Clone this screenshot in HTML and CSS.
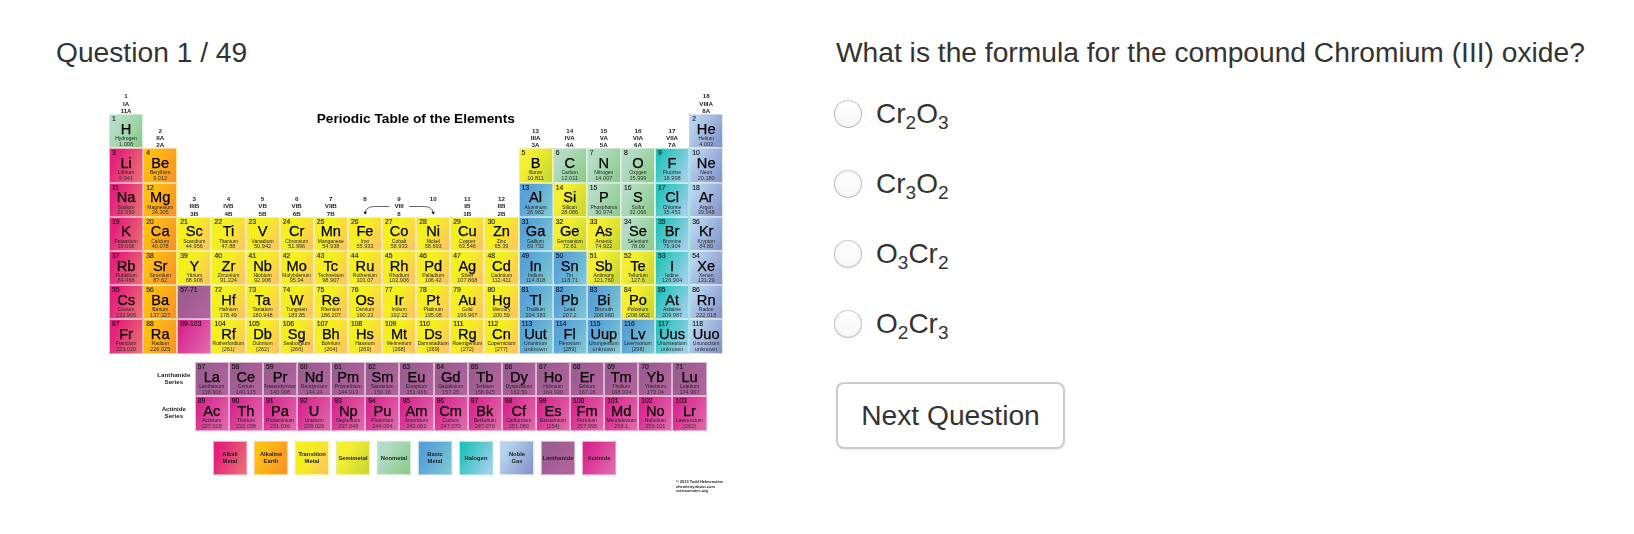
FILE: index.html
```html
<!DOCTYPE html>
<html lang="en">
<head>
<meta charset="utf-8">
<title>Question 1 / 49</title>
<link rel="stylesheet" href="styles.css">
</head>
<body>
<main class="page">
<section class="left">
<h3 class="heading">Question 1 / 49</h3>
<div class="chart">
<div class="table">
<div class="lbl"><p>1</p><p>IA</p><p>11A</p></div><div class="blank16"></div><div class="lbl"><p>18</p><p>VIIIA</p><p>8A</p></div>
<div class="c nm"><i>1</i><b>H</b><span>Hydrogen</span><em>1.008</em></div><div class="lbl"><p>2</p><p>IIA</p><p>2A</p></div><div class="title">Periodic Table of the Elements</div><div class="lbl"><p>13</p><p>IIIA</p><p>3A</p></div><div class="lbl"><p>14</p><p>IVA</p><p>4A</p></div><div class="lbl"><p>15</p><p>VA</p><p>5A</p></div><div class="lbl"><p>16</p><p>VIA</p><p>6A</p></div><div class="lbl"><p>17</p><p>VIIA</p><p>7A</p></div><div class="c ng"><i>2</i><b>He</b><span>Helium</span><em>4.003</em></div>
<div class="c am"><i>3</i><b>Li</b><span>Lithium</span><em>6.941</em></div><div class="c ae"><i>4</i><b>Be</b><span>Beryllium</span><em>9.012</em></div><div class="blank10"></div><div class="c sm"><i>5</i><b>B</b><span>Boron</span><em>10.811</em></div><div class="c nm"><i>6</i><b>C</b><span>Carbon</span><em>12.011</em></div><div class="c nm"><i>7</i><b>N</b><span>Nitrogen</span><em>14.007</em></div><div class="c nm"><i>8</i><b>O</b><span>Oxygen</span><em>15.999</em></div><div class="c ha"><i>9</i><b>F</b><span>Fluorine</span><em>18.998</em></div><div class="c ng"><i>10</i><b>Ne</b><span>Neon</span><em>20.180</em></div>
<div class="c am"><i>11</i><b>Na</b><span>Sodium</span><em>22.990</em></div><div class="c ae"><i>12</i><b>Mg</b><span>Magnesium</span><em>24.305</em></div><div class="lbl"><p>3</p><p>IIIB</p><p>3B</p></div><div class="lbl"><p>4</p><p>IVB</p><p>4B</p></div><div class="lbl"><p>5</p><p>VB</p><p>5B</p></div><div class="lbl"><p>6</p><p>VIB</p><p>6B</p></div><div class="lbl"><p>7</p><p>VIIB</p><p>7B</p></div>
<div class="triad"><div class="lbl"><p>8</p><p>&nbsp;</p><p>&nbsp;</p></div><div class="lbl"><p>9</p><p>VIII</p><p>8</p></div><div class="lbl"><p>10</p><p>&nbsp;</p><p>&nbsp;</p></div><svg class="arrows" viewBox="0 0 102 12" aria-hidden="true"><path d="M41 3.500H27C21 3.500 17.500 5.500 17 10M61 3.500H75C81 3.500 84.500 5.500 85 10" fill="none" stroke="#222" stroke-width=".7"/><path d="M15.300 8.800H18.800L17 11.800ZM83.200 8.800H86.700L85 11.800Z" fill="#111"/></svg></div>
<div class="lbl"><p>11</p><p>IB</p><p>1B</p></div><div class="lbl"><p>12</p><p>IIB</p><p>2B</p></div><div class="c bm"><i>13</i><b>Al</b><span>Aluminum</span><em>26.982</em></div><div class="c sm"><i>14</i><b>Si</b><span>Silicon</span><em>28.086</em></div><div class="c nm"><i>15</i><b>P</b><span>Phosphorus</span><em>30.974</em></div><div class="c nm"><i>16</i><b>S</b><span>Sulfur</span><em>32.066</em></div><div class="c ha"><i>17</i><b>Cl</b><span>Chlorine</span><em>35.453</em></div><div class="c ng"><i>18</i><b>Ar</b><span>Argon</span><em>39.948</em></div>
<div class="c am"><i>19</i><b>K</b><span>Potassium</span><em>39.098</em></div><div class="c ae"><i>20</i><b>Ca</b><span>Calcium</span><em>40.078</em></div><div class="c tm"><i>21</i><b>Sc</b><span>Scandium</span><em>44.956</em></div><div class="c tm"><i>22</i><b>Ti</b><span>Titanium</span><em>47.88</em></div><div class="c tm"><i>23</i><b>V</b><span>Vanadium</span><em>50.942</em></div><div class="c tm"><i>24</i><b>Cr</b><span>Chromium</span><em>51.996</em></div><div class="c tm"><i>25</i><b>Mn</b><span>Manganese</span><em>54.938</em></div><div class="c tm"><i>26</i><b>Fe</b><span>Iron</span><em>55.933</em></div><div class="c tm"><i>27</i><b>Co</b><span>Cobalt</span><em>58.933</em></div><div class="c tm"><i>28</i><b>Ni</b><span>Nickel</span><em>58.693</em></div><div class="c tm"><i>29</i><b>Cu</b><span>Copper</span><em>63.546</em></div><div class="c tm"><i>30</i><b>Zn</b><span>Zinc</span><em>65.39</em></div><div class="c bm"><i>31</i><b>Ga</b><span>Gallium</span><em>69.732</em></div><div class="c sm"><i>32</i><b>Ge</b><span>Germanium</span><em>72.61</em></div><div class="c sm"><i>33</i><b>As</b><span>Arsenic</span><em>74.922</em></div><div class="c nm"><i>34</i><b>Se</b><span>Selenium</span><em>78.09</em></div><div class="c ha"><i>35</i><b>Br</b><span>Bromine</span><em>79.904</em></div><div class="c ng"><i>36</i><b>Kr</b><span>Krypton</span><em>84.80</em></div>
<div class="c am"><i>37</i><b>Rb</b><span>Rubidium</span><em>84.468</em></div><div class="c ae"><i>38</i><b>Sr</b><span>Strontium</span><em>87.62</em></div><div class="c tm"><i>39</i><b>Y</b><span>Yttrium</span><em>88.906</em></div><div class="c tm"><i>40</i><b>Zr</b><span>Zirconium</span><em>91.224</em></div><div class="c tm"><i>41</i><b>Nb</b><span>Niobium</span><em>92.906</em></div><div class="c tm"><i>42</i><b>Mo</b><span>Molybdenum</span><em>95.94</em></div><div class="c tm"><i>43</i><b>Tc</b><span>Technetium</span><em>98.907</em></div><div class="c tm"><i>44</i><b>Ru</b><span>Ruthenium</span><em>101.07</em></div><div class="c tm"><i>45</i><b>Rh</b><span>Rhodium</span><em>102.906</em></div><div class="c tm"><i>46</i><b>Pd</b><span>Palladium</span><em>106.42</em></div><div class="c tm"><i>47</i><b>Ag</b><span>Silver</span><em>107.868</em></div><div class="c tm"><i>48</i><b>Cd</b><span>Cadmium</span><em>112.411</em></div><div class="c bm"><i>49</i><b>In</b><span>Indium</span><em>114.818</em></div><div class="c bm"><i>50</i><b>Sn</b><span>Tin</span><em>118.71</em></div><div class="c sm"><i>51</i><b>Sb</b><span>Antimony</span><em>121.760</em></div><div class="c sm"><i>52</i><b>Te</b><span>Tellurium</span><em>127.6</em></div><div class="c ha"><i>53</i><b>I</b><span>Iodine</span><em>126.904</em></div><div class="c ng"><i>54</i><b>Xe</b><span>Xenon</span><em>131.29</em></div>
<div class="c am"><i>55</i><b>Cs</b><span>Cesium</span><em>132.905</em></div><div class="c ae"><i>56</i><b>Ba</b><span>Barium</span><em>137.327</em></div><div class="c la"><i>57-71</i></div><div class="c tm"><i>72</i><b>Hf</b><span>Hafnium</span><em>178.49</em></div><div class="c tm"><i>73</i><b>Ta</b><span>Tantalum</span><em>180.948</em></div><div class="c tm"><i>74</i><b>W</b><span>Tungsten</span><em>183.85</em></div><div class="c tm"><i>75</i><b>Re</b><span>Rhenium</span><em>186.207</em></div><div class="c tm"><i>76</i><b>Os</b><span>Osmium</span><em>190.23</em></div><div class="c tm"><i>77</i><b>Ir</b><span>Iridium</span><em>192.22</em></div><div class="c tm"><i>78</i><b>Pt</b><span>Platinum</span><em>195.08</em></div><div class="c tm"><i>79</i><b>Au</b><span>Gold</span><em>196.967</em></div><div class="c tm"><i>80</i><b>Hg</b><span>Mercury</span><em>200.59</em></div><div class="c bm"><i>81</i><b>Tl</b><span>Thallium</span><em>204.383</em></div><div class="c bm"><i>82</i><b>Pb</b><span>Lead</span><em>207.2</em></div><div class="c bm"><i>83</i><b>Bi</b><span>Bismuth</span><em>208.980</em></div><div class="c sm"><i>84</i><b>Po</b><span>Polonium</span><em>[208.982]</em></div><div class="c ha"><i>85</i><b>At</b><span>Astatine</span><em>209.987</em></div><div class="c ng"><i>86</i><b>Rn</b><span>Radon</span><em>222.018</em></div>
<div class="c am"><i>87</i><b>Fr</b><span>Francium</span><em>223.020</em></div><div class="c ae"><i>88</i><b>Ra</b><span>Radium</span><em>226.025</em></div><div class="c ac"><i>89-103</i></div><div class="c tm"><i>104</i><b>Rf</b><span>Rutherfordium</span><em>[261]</em></div><div class="c tm"><i>105</i><b>Db</b><span>Dubnium</span><em>[262]</em></div><div class="c tm"><i>106</i><b>Sg</b><span>Seaborgium</span><em>[266]</em></div><div class="c tm"><i>107</i><b>Bh</b><span>Bohrium</span><em>[264]</em></div><div class="c tm"><i>108</i><b>Hs</b><span>Hassium</span><em>[269]</em></div><div class="c tm"><i>109</i><b>Mt</b><span>Meitnerium</span><em>[268]</em></div><div class="c tm"><i>110</i><b>Ds</b><span>Darmstadtium</span><em>[269]</em></div><div class="c tm"><i>111</i><b>Rg</b><span>Roentgenium</span><em>[272]</em></div><div class="c tm"><i>112</i><b>Cn</b><span>Copernicium</span><em>[277]</em></div><div class="c bm"><i>113</i><b>Uut</b><span>Ununtrium</span><em>unknown</em></div><div class="c bm"><i>114</i><b>Fl</b><span>Flerovium</span><em>[289]</em></div><div class="c bm"><i>115</i><b>Uup</b><span>Ununpentium</span><em>unknown</em></div><div class="c bm"><i>116</i><b>Lv</b><span>Livermorium</span><em>[298]</em></div><div class="c ha"><i>117</i><b>Uus</b><span>Ununseptium</span><em>unknown</em></div><div class="c ng"><i>118</i><b>Uuo</b><span>Ununoctium</span><em>unknown</em></div>
</div>
<div class="series">
<div class="series-row"><div class="series-name">Lanthanide<br>Series</div><div class="c la"><i>57</i><b>La</b><span>Lanthanum</span><em>138.906</em></div><div class="c la"><i>58</i><b>Ce</b><span>Cerium</span><em>140.115</em></div><div class="c la"><i>59</i><b>Pr</b><span>Praseodymium</span><em>140.908</em></div><div class="c la"><i>60</i><b>Nd</b><span>Neodymium</span><em>144.24</em></div><div class="c la"><i>61</i><b>Pm</b><span>Promethium</span><em>144.913</em></div><div class="c la"><i>62</i><b>Sm</b><span>Samarium</span><em>150.36</em></div><div class="c la"><i>63</i><b>Eu</b><span>Europium</span><em>151.966</em></div><div class="c la"><i>64</i><b>Gd</b><span>Gadolinium</span><em>157.25</em></div><div class="c la"><i>65</i><b>Tb</b><span>Terbium</span><em>158.925</em></div><div class="c la"><i>66</i><b>Dy</b><span>Dysprosium</span><em>162.50</em></div><div class="c la"><i>67</i><b>Ho</b><span>Holmium</span><em>164.930</em></div><div class="c la"><i>68</i><b>Er</b><span>Erbium</span><em>167.26</em></div><div class="c la"><i>69</i><b>Tm</b><span>Thulium</span><em>168.934</em></div><div class="c la"><i>70</i><b>Yb</b><span>Ytterbium</span><em>173.04</em></div><div class="c la"><i>71</i><b>Lu</b><span>Lutetium</span><em>174.967</em></div></div>
<div class="series-row"><div class="series-name">Actinide<br>Series</div><div class="c ac"><i>89</i><b>Ac</b><span>Actinium</span><em>227.028</em></div><div class="c ac"><i>90</i><b>Th</b><span>Thorium</span><em>232.038</em></div><div class="c ac"><i>91</i><b>Pa</b><span>Protactinium</span><em>231.036</em></div><div class="c ac"><i>92</i><b>U</b><span>Uranium</span><em>238.029</em></div><div class="c ac"><i>93</i><b>Np</b><span>Neptunium</span><em>237.048</em></div><div class="c ac"><i>94</i><b>Pu</b><span>Plutonium</span><em>244.064</em></div><div class="c ac"><i>95</i><b>Am</b><span>Americium</span><em>243.061</em></div><div class="c ac"><i>96</i><b>Cm</b><span>Curium</span><em>247.070</em></div><div class="c ac"><i>97</i><b>Bk</b><span>Berkelium</span><em>247.070</em></div><div class="c ac"><i>98</i><b>Cf</b><span>Californium</span><em>251.080</em></div><div class="c ac"><i>99</i><b>Es</b><span>Einsteinium</span><em>[254]</em></div><div class="c ac"><i>100</i><b>Fm</b><span>Fermium</span><em>257.095</em></div><div class="c ac"><i>101</i><b>Md</b><span>Mendelevium</span><em>258.1</em></div><div class="c ac"><i>102</i><b>No</b><span>Nobelium</span><em>259.101</em></div><div class="c ac"><i>103</i><b>Lr</b><span>Lawrencium</span><em>[262]</em></div></div>
</div>
<div class="legend">
<div class="key am">Alkali<br>Metal</div><div class="key ae">Alkaline<br>Earth</div><div class="key tm">Transition<br>Metal</div><div class="key sm">Semimetal</div><div class="key nm">Nonmetal</div><div class="key bm">Basic<br>Metal</div><div class="key ha">Halogen</div><div class="key ng">Noble<br>Gas</div><div class="key la">Lanthanide</div><div class="key ac">Actinide</div>
</div>
<div class="credit">© 2013 Todd Helmenstine<br>chemistry.about.com<br>sciencenotes.org</div>
</div>
</section>
<section class="right">
<h3 class="heading">What is the formula for the compound Chromium (III) oxide?</h3>
<label class="option"><input type="radio" name="answer"><span>Cr<sub>2</sub>O<sub>3</sub></span></label>
<label class="option"><input type="radio" name="answer"><span>Cr<sub>3</sub>O<sub>2</sub></span></label>
<label class="option"><input type="radio" name="answer"><span>O<sub>3</sub>Cr<sub>2</sub></span></label>
<label class="option"><input type="radio" name="answer"><span>O<sub>2</sub>Cr<sub>3</sub></span></label>
<button class="next" type="button">Next Question</button>
</section>
</main>
</body>
</html>
```
FILE: styles.css
```css
* { box-sizing: border-box; }
html, body { margin: 0; background: #fff; }
body { font-family: "Liberation Sans", Arial, sans-serif; color: #333; }
.page { display: flex; height: 534px; overflow: hidden; }
.left { flex: 0 0 836px; padding-left: 56px; }
.right { flex: 1; min-width: 0; }
.heading { margin: 39px 0 0; font-size: 28.200px; line-height: 26px; font-weight: 400; white-space: nowrap; }

.chart { width: 668px; margin-top: 23px; padding-left: 53px; color: #000; filter: blur(.3px); }
.table { display: grid; grid-template-columns: repeat(18, 34.13px); grid-template-rows: 26.3px repeat(7, 34.2px); }
.blank16 { grid-column: span 16; }
.blank10 { grid-column: span 10; }
.title { grid-column: span 10; justify-self: end; margin-top: -2px; padding-right: 3.600px; font-size: 13.700px; line-height: 14px; font-weight: 700; white-space: nowrap; }
.lbl { align-self: end; text-align: center; font-size: 6.200px; line-height: 7.300px; font-weight: 700; color: #222; }
.lbl p { margin: 0; }
.triad { grid-column: span 3; position: relative; display: grid; grid-template-columns: repeat(3, 1fr); align-self: end; }
.arrows { position: absolute; left: 0; bottom: 2px; width: 100%; height: 12px; }

.c { width: 34.13px; height: 34.2px; padding-top: 1px; border: .5px solid rgba(255, 255, 255, .55); overflow: hidden; text-align: center; white-space: nowrap; }
.c i { display: block; padding-left: 2px; text-align: left; font-size: 6.800px; line-height: 6.500px; font-style: normal; color: #111; -webkit-text-stroke: .1px #111; }
.c b { display: block; font-size: 14.600px; line-height: 13.400px; font-weight: 400; color: #000; -webkit-text-stroke: .25px #000; }
.c span, .c em { display: block; font-size: 5px; line-height: 5.500px; font-style: normal; margin: 0 -2px; color: #222; }
.c em { color: #333; font-size: 5.600px; }

.am { background: linear-gradient(115deg, #e5217c 20%, #e9756f 100%); }
.ae { background: linear-gradient(115deg, #ffc20f 15%, #f8902a 100%); }
.tm { background: linear-gradient(120deg, #f5ef1f 40%, #ffc06a 100%); }
.sm { background: linear-gradient(120deg, #f5ef34 30%, #c5d52f 100%); }
.nm { background: linear-gradient(120deg, #b4ddc6 20%, #89cb87 100%); }
.bm { background: linear-gradient(120deg, #58a2d8 25%, #7fcbd0 100%); }
.ha { background: linear-gradient(120deg, #26c3bb 15%, #a0cfeb 90%); }
.ng { background: linear-gradient(120deg, #b6d4ef 15%, #8490c8 100%); }
.la { background: linear-gradient(125deg, #9b5c90 20%, #b5649f 100%); }
.ac { background: linear-gradient(120deg, #d9268f 15%, #e06dac 100%); }

.series { margin-top: 8.600px; }
.series-row { display: flex; align-items: flex-start; }
.series-name { flex: 0 0 85.700px; padding: 8.800px 0 0 44px; text-align: center; font-size: 6.200px; line-height: 7.300px; font-weight: 700; color: #222; white-space: nowrap; }

.legend { display: flex; gap: 7px; margin-top: 10.500px; padding-left: 104px; }
.key { flex: 0 0 34px; height: 34.400px; display: flex; align-items: center; justify-content: center; text-align: center; font-size: 5.800px; line-height: 7.300px; font-weight: 700; color: #222; border: 1px solid rgba(255, 255, 255, .5); box-shadow: 0 0 0 .5px rgba(120, 120, 120, .12); white-space: nowrap; }

.credit { margin-top: 5px; padding-left: 567px; font-size: 3.900px; line-height: 4.400px; font-weight: 700; color: #222; white-space: nowrap; }

.option { display: flex; align-items: center; height: 70px; }
.option:first-of-type { margin-top: 14px; }
.option input { appearance: none; -webkit-appearance: none; flex: none; width: 28px; height: 28px; margin: 0 14px 0 -2px; border-radius: 50%; border: 1px solid #bdbdbd; border-top-color: #cacaca; background: linear-gradient(#fff, #f7f7f7); box-shadow: inset 0 -1px 1px rgba(0, 0, 0, .05); }
.option span { font-size: 28px; line-height: 30px; }
.option sub { font-size: 68%; line-height: 0; vertical-align: -.3em; }
.next { display: block; width: 229px; height: 67px; margin: 23px 0 0; border: 2px solid #ccc; border-radius: 8px; background: #fff; color: #333; font: 400 28.200px/1 "Liberation Sans", Arial, sans-serif; box-shadow: 0 1px 2px rgba(0, 0, 0, .08); }
```
